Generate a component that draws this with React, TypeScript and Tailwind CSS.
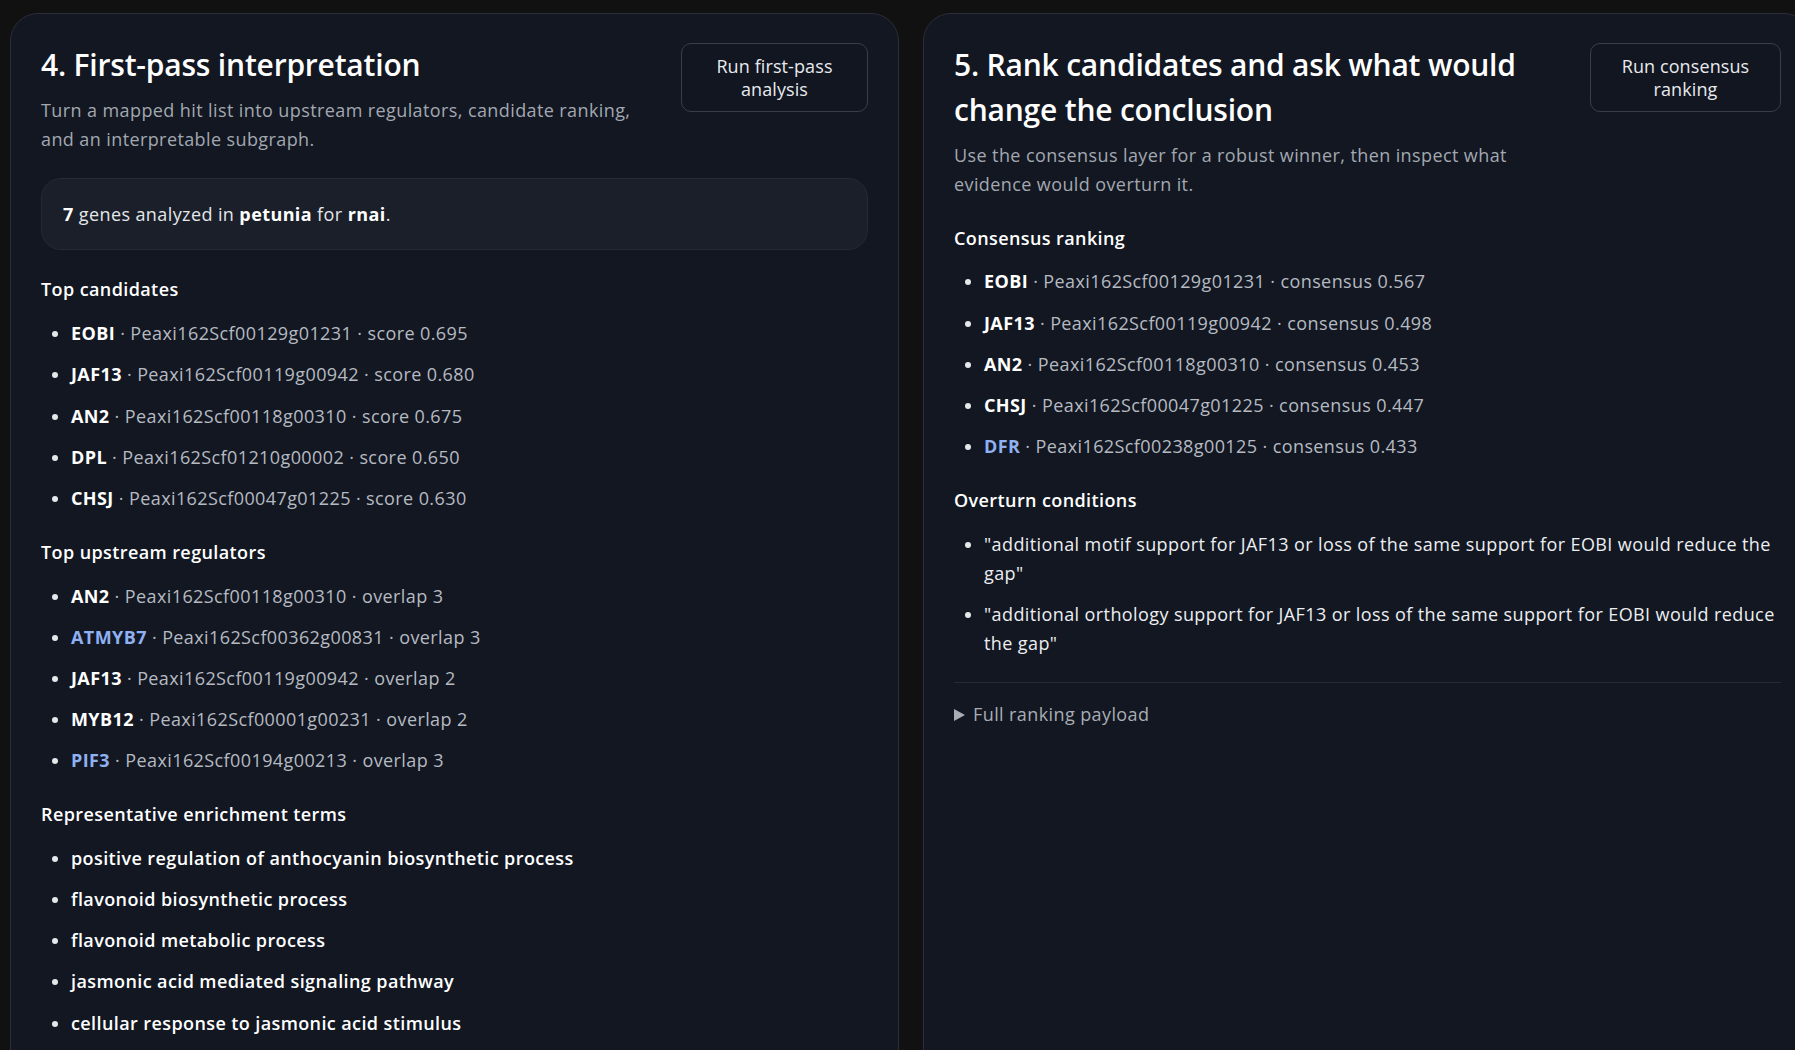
import React from 'react';

type Gene = { name: string; id: string; tail: string; link?: boolean };

const topCandidates: Gene[] = [
  { name: 'EOBI', id: 'Peaxi162Scf00129g01231', tail: 'score 0.695' },
  { name: 'JAF13', id: 'Peaxi162Scf00119g00942', tail: 'score 0.680' },
  { name: 'AN2', id: 'Peaxi162Scf00118g00310', tail: 'score 0.675' },
  { name: 'DPL', id: 'Peaxi162Scf01210g00002', tail: 'score 0.650' },
  { name: 'CHSJ', id: 'Peaxi162Scf00047g01225', tail: 'score 0.630' },
];

const regulators: Gene[] = [
  { name: 'AN2', id: 'Peaxi162Scf00118g00310', tail: 'overlap 3' },
  { name: 'ATMYB7', id: 'Peaxi162Scf00362g00831', tail: 'overlap 3', link: true },
  { name: 'JAF13', id: 'Peaxi162Scf00119g00942', tail: 'overlap 2' },
  { name: 'MYB12', id: 'Peaxi162Scf00001g00231', tail: 'overlap 2' },
  { name: 'PIF3', id: 'Peaxi162Scf00194g00213', tail: 'overlap 3', link: true },
];

const consensus: Gene[] = [
  { name: 'EOBI', id: 'Peaxi162Scf00129g01231', tail: 'consensus 0.567' },
  { name: 'JAF13', id: 'Peaxi162Scf00119g00942', tail: 'consensus 0.498' },
  { name: 'AN2', id: 'Peaxi162Scf00118g00310', tail: 'consensus 0.453' },
  { name: 'CHSJ', id: 'Peaxi162Scf00047g01225', tail: 'consensus 0.447' },
  { name: 'DFR', id: 'Peaxi162Scf00238g00125', tail: 'consensus 0.433', link: true },
];

const terms = [
  'positive regulation of anthocyanin biosynthetic process',
  'flavonoid biosynthetic process',
  'flavonoid metabolic process',
  'jasmonic acid mediated signaling pathway',
  'cellular response to jasmonic acid stimulus',
];

const overturn = [
  '"additional motif support for JAF13 or loss of the same support for EOBI would reduce the gap"',
  '"additional orthology support for JAF13 or loss of the same support for EOBI would reduce the gap"',
];

function GeneList({ items }: { items: Gene[] }) {
  return (
    <ul className="list-disc pl-[30px] flex flex-col gap-[12.4px] marker:text-[#e5e7eb]">
      {items.map((g) => (
        <li key={g.name + g.id} className="leading-[28.8px]">
          <span className={g.link ? 'font-bold text-[#8fb1f2]' : 'font-bold text-white'}>{g.name}</span>
          <span className="text-[#b6bac1]"> · {g.id} · {g.tail}</span>
        </li>
      ))}
    </ul>
  );
}

function Section({ title, children }: { title: string; children: React.ReactNode }) {
  return (
    <div>
      <h3 className="font-semibold text-white leading-[28.8px] mb-[15px]">{title}</h3>
      {children}
    </div>
  );
}

function Header({ title, desc, button, buttonWidth }: { title: React.ReactNode; desc: React.ReactNode; button: React.ReactNode; buttonWidth: string }) {
  return (
    <div className="flex items-start justify-between gap-6">
      <div className="flex-1">
        <h2 className="text-[30px] leading-[45px] font-semibold tracking-[-0.2px] text-white">{title}</h2>
        <p className="mt-[9px] text-[#a3a8b0] leading-[28.8px]">{desc}</p>
      </div>
      <button
        className={`${buttonWidth} shrink-0 mt-[1px] h-[69px] rounded-[10px] border border-[#3a3e46] bg-[#111620] text-[#e8eaee] text-[18px] tracking-[0.1px] leading-[22.5px] text-center`}
      >
        {button}
      </button>
    </div>
  );
}

export default function App() {
  return (
    <div
      className="w-screen h-screen overflow-hidden bg-[#111111] pt-[13px] pl-[10px] text-[18px] tracking-[0.4px]"
      style={{ fontFamily: '"Open Sans", "Noto Sans", sans-serif' }}
    >
      <div className="flex gap-[24px] items-stretch">
        {/* step 4 */}
        <div className="w-[889px] shrink-0 min-h-[1100px] rounded-[28px] border border-[#2a2e36] bg-[#121722] px-[30px] pt-[28px] pb-[30px]">
          <Header
            title="4. First-pass interpretation"
            desc={<>Turn a mapped hit list into upstream regulators, candidate ranking,<br />and an interpretable subgraph.</>}
            button={<>Run first-pass<br />analysis</>}
            buttonWidth="w-[187px]"
          />
          <div className="mt-[24px] flex flex-col gap-[25px]">
            <div className="rounded-[20px] border border-[#252a33] bg-[#1a1f29] px-[21px] py-[21px] leading-[28.8px] text-[#e5e7eb]">
              <span className="font-bold text-white">7</span> genes analyzed in <span className="font-bold text-white">petunia</span> for{' '}
              <span className="font-bold text-white">rnai</span>.
            </div>
            <Section title="Top candidates">
              <GeneList items={topCandidates} />
            </Section>
            <Section title="Top upstream regulators">
              <GeneList items={regulators} />
            </Section>
            <Section title="Representative enrichment terms">
              <ul className="list-disc pl-[30px] flex flex-col gap-[12.4px] marker:text-[#e5e7eb]">
                {terms.map((t) => (
                  <li key={t} className="leading-[28.8px] font-semibold text-white">
                    {t}
                  </li>
                ))}
              </ul>
            </Section>
          </div>
        </div>

        {/* step 5 */}
        <div className="w-[889px] shrink-0 min-h-[1100px] rounded-[28px] border border-[#2a2e36] bg-[#121722] px-[30px] pt-[28px] pb-[30px]">
          <Header
            title={<>5. Rank candidates and ask what would<br />change the conclusion</>}
            desc={<>Use the consensus layer for a robust winner, then inspect what<br />evidence would overturn it.</>}
            button={<>Run consensus<br />ranking</>}
            buttonWidth="w-[191px]"
          />
          <div className="mt-[25px] flex flex-col gap-[25px]">
            <Section title="Consensus ranking">
              <GeneList items={consensus} />
            </Section>
            <Section title="Overturn conditions">
              <ul className="list-disc pl-[30px] flex flex-col gap-[12.4px] marker:text-[#e5e7eb]">
                {overturn.map((t) => (
                  <li key={t} className="leading-[28.8px] text-[#eceef1]">
                    {t}
                  </li>
                ))}
              </ul>
            </Section>
            <div className="border-t border-[#262a32] pt-[17px]">
              <div className="flex items-center gap-[8px] text-[#a9adb4] leading-[28.8px]">
                <svg width="11" height="12" viewBox="0 0 11 12" className="shrink-0">
                  <path d="M0 0 L11 6 L0 12 Z" fill="#a9adb4" />
                </svg>
                <span>Full ranking payload</span>
              </div>
            </div>
          </div>
        </div>
      </div>
    </div>
  );
}
